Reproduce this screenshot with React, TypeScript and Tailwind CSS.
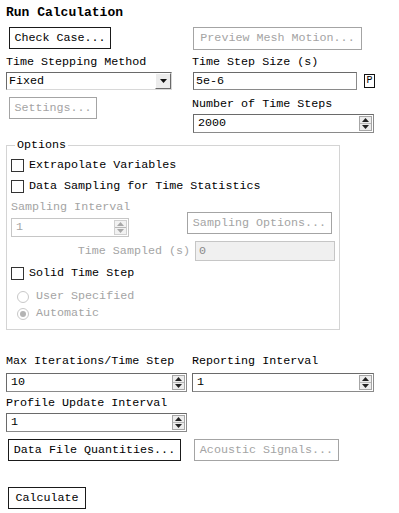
import type { ReactNode } from "react";

const mono = { fontFamily: '"Liberation Mono", "DejaVu Sans Mono", monospace' };

function Btn({
  children,
  width,
  disabled,
  className = "",
}: {
  children: ReactNode;
  width: string;
  disabled?: boolean;
  className?: string;
}) {
  return (
    <div
      className={`flex h-[22px] shrink-0 items-center justify-center border bg-white leading-[13px] ${width} ${
        disabled ? "border-[#a4a4a4] text-[#a4a4a4]" : "border-[#1a1a1a] text-black"
      } ${className}`}
    >
      {children}
    </div>
  );
}

function Arrows({ disabled }: { disabled?: boolean }) {
  const fill = disabled ? "#a8a8a8" : "#222";
  return (
    <div
      className={`flex h-[15px] w-[13px] flex-col border ${
        disabled ? "border-[#d0d0d0] bg-[#f2f2f2]" : "border-[#a6a6a6] bg-[#ececec]"
      }`}
    >
      <div className="flex flex-1 items-center justify-center border-b border-[#b8b8b8]">
        <svg width="7" height="4" viewBox="0 0 7 4">
          <path d="M3.5 0 L7 4 L0 4 Z" fill={fill} />
        </svg>
      </div>
      <div className="flex flex-1 items-center justify-center">
        <svg width="7" height="4" viewBox="0 0 7 4">
          <path d="M0 0 L7 0 L3.5 4 Z" fill={fill} />
        </svg>
      </div>
    </div>
  );
}

function Spin({ value, width, disabled, className = "" }: { value: string; width: string; disabled?: boolean; className?: string }) {
  return (
    <div
      className={`flex h-[19px] shrink-0 items-center justify-between border pl-[4px] pr-[1px] leading-[13px] ${width} ${
        disabled
          ? "border-[#c6c6c6] bg-white text-[#a4a4a4]"
          : "border-[#8a8a8a] border-l-[#6a6a6a] border-t-[#6a6a6a] bg-white text-black"
      } ${className}`}
    >
      <span>{value}</span>
      <Arrows disabled={disabled} />
    </div>
  );
}

function Check({ label }: { label: string }) {
  return (
    <div className="flex h-[13px] items-center gap-[5px] leading-[13px]">
      <div className="h-[13px] w-[13px] shrink-0 border border-[#333] bg-white" />
      <span>{label}</span>
    </div>
  );
}

function Radio({ label, checked }: { label: string; checked?: boolean }) {
  return (
    <div className="ml-[6px] flex h-[13px] items-center gap-[7px] leading-[13px] text-[#a4a4a4]">
      <div className="flex h-[12px] w-[12px] shrink-0 items-center justify-center rounded-full border border-[#c8c8c8] bg-white">
        {checked ? <div className="h-[6px] w-[6px] rounded-full bg-[#b4b4b4]" /> : null}
      </div>
      <span>{label}</span>
    </div>
  );
}

export default function App() {
  return (
    <div
      className="h-[513px] w-[399px] overflow-hidden bg-white pl-[6px] pt-[5px] text-[11.7px] text-black"
      style={mono}
    >
      <div className="h-[16px] text-[13px] font-bold leading-[16px]">Run Calculation</div>

      <div className="mt-[6px] grid grid-cols-[186px_183px]">
        <div className="flex flex-col">
          <Btn width="w-[102px]" className="ml-[3px]">Check Case...</Btn>
          <div className="mt-[7px] h-[13px] leading-[13px]">Time Stepping Method</div>
          <div className="mt-[3px] flex h-[18px] w-[166px] items-center justify-between border border-[#6a6a6a] border-b-[#d8d8d8] border-r-[#d8d8d8] bg-white pl-[2px] leading-[13px]">
            <span>Fixed</span>
            <div className="flex h-[16px] w-[16px] items-center justify-center border border-white border-b-[#6a6a6a] border-r-[#6a6a6a] bg-[#ececec]">
              <svg width="7" height="4" viewBox="0 0 7 4">
                <path d="M0 0 L7 0 L3.5 4 Z" fill="#111" />
              </svg>
            </div>
          </div>
          <Btn width="w-[88px]" disabled className="ml-[3px] mt-[7px]">Settings...</Btn>
        </div>

        <div className="flex flex-col">
          <Btn width="w-[169px]" disabled className="ml-[1px] h-[23px]">Preview Mesh Motion...</Btn>
          <div className="mt-[6px] h-[13px] leading-[13px]">Time Step Size (s)</div>
          <div className="mt-[3px] flex items-center">
            <div className="ml-[1px] flex h-[18px] w-[168px] items-center border border-[#8a8a8a] border-l-[#6a6a6a] border-t-[#6a6a6a] bg-white pl-[2px] leading-[13px]">
              5e-6
            </div>
            <div className="ml-[7px] flex h-[14px] w-[11px] items-center justify-center border border-[#111] text-[10px] leading-[10px]">
              P
            </div>
          </div>
          <div className="mt-[8px] h-[13px] leading-[13px]">Number of Time Steps</div>
          <Spin value="2000" width="w-[181px]" className="ml-[1px] mt-[3px]" />
        </div>
      </div>

      <fieldset className="mt-[6px] w-[334px] border border-[#d4d4d4] pb-[9px] pl-[4px]">
        <legend className="ml-[4px] px-[2px] leading-[13px]">Options</legend>
        <div className="mt-[7px]">
          <Check label="Extrapolate Variables" />
        </div>
        <div className="mt-[8px]">
          <Check label="Data Sampling for Time Statistics" />
        </div>
        <div className="mt-[8px] flex">
          <div className="flex w-[176px] flex-col">
            <div className="h-[13px] leading-[13px] text-[#a4a4a4]">Sampling Interval</div>
            <Spin value="1" width="w-[118px]" disabled className="mt-[4px]" />
          </div>
          <Btn width="w-[145px]" disabled className="mt-[11px]">Sampling Options...</Btn>
        </div>
        <div className="mt-[4px] flex items-center">
          <div className="w-[179px] text-right leading-[13px] text-[#a4a4a4]">Time Sampled (s)</div>
          <div className="ml-[5px] flex h-[20px] w-[140px] items-center border border-[#c6c6c6] bg-[#f0f0f0] pl-[3px] leading-[13px] text-[#8a8a8a]">
            0
          </div>
        </div>
        <div className="mt-[6px]">
          <Check label="Solid Time Step" />
        </div>
        <div className="mt-[10px]">
          <Radio label="User Specified" />
        </div>
        <div className="mt-[4px]">
          <Radio label="Automatic" checked />
        </div>
      </fieldset>

      <div className="mt-[25px] grid grid-cols-[186px_183px]">
        <div className="flex flex-col">
          <div className="h-[13px] leading-[13px]">Max Iterations/Time Step</div>
          <Spin value="10" width="w-[181px]" className="mt-[5px]" />
        </div>
        <div className="flex flex-col">
          <div className="h-[13px] leading-[13px]">Reporting Interval</div>
          <Spin value="1" width="w-[182px]" className="mt-[5px]" />
        </div>
      </div>
      <div className="mt-[5px] h-[13px] leading-[13px]">Profile Update Interval</div>
      <Spin value="1" width="w-[181px]" className="mt-[3px]" />

      <div className="mt-[7px] flex gap-[13px] pl-[2px]">
        <Btn width="w-[173px]">Data File Quantities...</Btn>
        <Btn width="w-[145px]" disabled>Acoustic Signals...</Btn>
      </div>

      <Btn width="w-[78px]" className="ml-[2px] mt-[26px]">Calculate</Btn>
    </div>
  );
}
